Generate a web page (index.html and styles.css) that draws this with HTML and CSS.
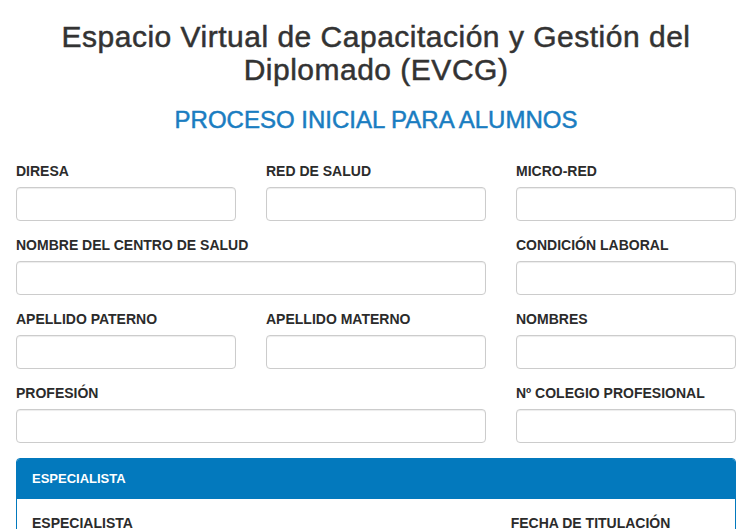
FILE: index.html
```html
<!DOCTYPE html>
<html lang="es">
<head>
<meta charset="utf-8">
<title>EVCG</title>
<link rel="stylesheet" href="styles.css">
</head>
<body>
<div class="container">
  <h1 class="title">Espacio Virtual de Capacitación y Gestión del Diplomado (EVCG)</h1>
  <h2 class="subtitle">PROCESO INICIAL PARA ALUMNOS</h2>
  <form class="form-grid">
    <div class="group"><label>DIRESA</label><input type="text"></div>
    <div class="group"><label>RED DE SALUD</label><input type="text"></div>
    <div class="group"><label>MICRO-RED</label><input type="text"></div>

    <div class="group span2"><label>NOMBRE DEL CENTRO DE SALUD</label><input type="text"></div>
    <div class="group"><label>CONDICIÓN LABORAL</label><input type="text"></div>

    <div class="group"><label>APELLIDO PATERNO</label><input type="text"></div>
    <div class="group"><label>APELLIDO MATERNO</label><input type="text"></div>
    <div class="group"><label>NOMBRES</label><input type="text"></div>

    <div class="group span2"><label>PROFESIÓN</label><input type="text"></div>
    <div class="group"><label>Nº COLEGIO PROFESIONAL</label><input type="text"></div>
  </form>
  <div class="panel">
    <div class="panel-heading">ESPECIALISTA</div>
    <div class="panel-body">
      <div class="group cell"><label>ESPECIALISTA</label><input type="text"></div>
      <div class="group cell"><label>FECHA DE TITULACIÓN</label><input type="text"></div>
    </div>
  </div>
</div>
</body>
</html>
```
FILE: styles.css
```css
* { box-sizing: border-box; }
html, body { margin: 0; padding: 0; background: #fff; }
body {
  font-family: "Liberation Sans", Arial, Helvetica, sans-serif;
  font-size: 14px;
  line-height: 1.42857;
  color: #333;
}
.container {
  padding: 0 12px 0 16px;
}
.title {
  margin: 20px 0 0;
  font-size: 30px;
  font-weight: 500;
  line-height: 33px;
  letter-spacing: 0.5px;
  -webkit-text-stroke: 0.5px #333;
  text-align: center;
  color: #333;
}
.subtitle {
  margin: 21px 0 0;
  font-size: 24px;
  font-weight: 500;
  line-height: 26px;
  -webkit-text-stroke: 0.5px #1a7dc1;
  text-align: center;
  color: #1a7dc1;
}
.form-grid {
  margin-top: 29px;
  display: grid;
  grid-template-columns: 220px 220px 220px;
  column-gap: 30px;
}
.group {
  margin-bottom: 15px;
}
.group label {
  display: block;
  font-weight: bold;
  margin-bottom: 5px;
  color: #2b2b2b;
}
.group input {
  display: block;
  width: 100%;
  height: 34px;
  border: 1px solid #ccc;
  border-radius: 4px;
  box-shadow: inset 0 1px 1px rgba(0,0,0,0.075);
  background: #fff;
  font: inherit;
  padding: 6px 12px;
}
.span2 { grid-column: span 2; }
.panel {
  width: 720px;
  border: 1px solid #0379bd;
  border-radius: 4px;
  overflow: hidden;
}
.panel-heading {
  background: #0379bd;
  color: #fff;
  font-weight: bold;
  font-size: 13px;
  padding: 11px 15px 11px;
  line-height: 18px;
}
.panel-body {
  padding: 15px 0;
  display: grid;
  grid-template-columns: 2fr 1fr;
}
.cell {
  padding: 0 15px;
}
```
